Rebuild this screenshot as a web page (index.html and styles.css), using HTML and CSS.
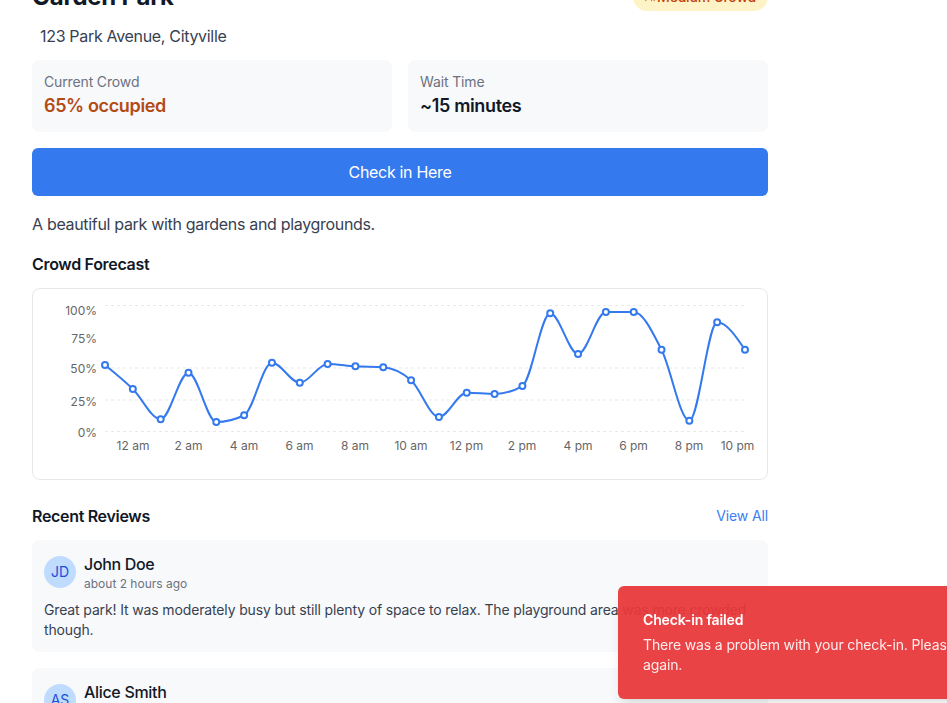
FILE: index.html
```html
<!DOCTYPE html>
<html lang="en">
<head>
<meta charset="utf-8">
<title>Garden Park</title>
<link rel="stylesheet" href="styles.css">
</head>
<body>
<main class="page">
  <header class="place-header">
    <h1 class="place-title">Garden Park</h1>
    <span class="badge">
      <svg class="badge-icon" viewBox="0 0 24 24" fill="none" stroke="currentColor" stroke-width="2" stroke-linecap="round" stroke-linejoin="round"><path d="M16 21v-2a4 4 0 0 0-4-4H6a4 4 0 0 0-4 4v2"/><circle cx="9" cy="7" r="4"/><path d="M22 21v-2a4 4 0 0 0-3-3.87"/><path d="M16 3.13a4 4 0 0 1 0 7.75"/></svg>
      Medium Crowd
    </span>
  </header>
  <p class="address">123 Park Avenue, Cityville</p>

  <div class="stats">
    <div class="stat">
      <div class="stat-label">Current Crowd</div>
      <div class="stat-value stat-value--warn">65% occupied</div>
    </div>
    <div class="stat">
      <div class="stat-label">Wait Time</div>
      <div class="stat-value">~15 minutes</div>
    </div>
  </div>

  <button class="checkin-btn" type="button">Check in Here</button>

  <p class="description">A beautiful park with gardens and playgrounds.</p>

  <h2 class="section-title section-title--chart">Crowd Forecast</h2>
  <div class="chart-card">
    <svg class="chart" width="704" height="160" viewBox="0 0 704 160">
      <g class="grid">
        <line x1="57" x2="697" y1="1.5" y2="1.5"/>
        <line x1="57" x2="697" y1="64" y2="64"/>
        <line x1="57" x2="697" y1="96" y2="96"/>
        <line x1="57" x2="697" y1="127.5" y2="127.5"/>
      </g>
      <g class="axis axis--y">
        <text x="49" y="6">100%</text>
        <text x="49" y="34">75%</text>
        <text x="49" y="64">50%</text>
        <text x="49" y="97">25%</text>
        <text x="49" y="128">0%</text>
      </g>
      <g class="axis axis--x">
        <text x="85" y="141">12 am</text>
        <text x="140.5" y="141">2 am</text>
        <text x="196" y="141">4 am</text>
        <text x="251.5" y="141">6 am</text>
        <text x="307" y="141">8 am</text>
        <text x="363" y="141">10 am</text>
        <text x="418.5" y="141">12 pm</text>
        <text x="474" y="141">2 pm</text>
        <text x="530" y="141">4 pm</text>
        <text x="585.5" y="141">6 pm</text>
        <text x="641" y="141">8 pm</text>
        <text x="689.5" y="141">10 pm</text>
      </g>
      <g id="series"></g>
    </svg>
  </div>

  <div class="reviews-header">
    <h2 class="section-title">Recent Reviews</h2>
    <a class="view-all" href="#">View All</a>
  </div>

  <div class="reviews">
    <article class="review">
      <div class="review-head">
        <div class="avatar">JD</div>
        <div>
          <div class="review-name">John Doe</div>
          <div class="review-time">about 2 hours ago</div>
        </div>
      </div>
      <p class="review-text">Great park! It was moderately busy but still plenty of space to relax. The playground area was more crowded though.</p>
    </article>
    <article class="review">
      <div class="review-head">
        <div class="avatar">AS</div>
        <div>
          <div class="review-name">Alice Smith</div>
          <div class="review-time">about 5 hours ago</div>
        </div>
      </div>
      <p class="review-text">Lovely gardens and clean paths. Got a little busy around lunchtime, but easy to find a quiet bench.</p>
    </article>
  </div>
</main>

<div class="toast" role="status">
  <div class="toast-title">Check-in failed</div>
  <div class="toast-desc">There was a problem with your check-in. Please try again.</div>
</div>

<script src="script.js"></script>
</body>
</html>
```

FILE: styles.css
```css
* { box-sizing: border-box; }

html, body {
  margin: 0;
  padding: 0;
  overflow: hidden;
  background: #ffffff;
}

body {
  font-family: "Inter", "Noto Sans", "Liberation Sans", sans-serif;
  color: #111827;
  font-size: 16px;
  line-height: 24px;
  letter-spacing: -0.02em;
}

.page {
  width: 736px;
  margin: -19px 0 0 32px;
  padding-bottom: 40px;
}

.place-header {
  display: flex;
  justify-content: space-between;
  align-items: center;
  height: 32px;
}

.place-title {
  margin: 0;
  font-size: 24px;
  line-height: 32px;
  font-weight: 700;
  letter-spacing: -0.01em;
  color: #111827;
}

.badge {
  display: inline-flex;
  align-items: center;
  gap: 2px;
  padding: 4px 12px;
  border-radius: 9999px;
  background: #fef3c7;
  color: #c2410c;
  font-size: 14px;
  line-height: 20px;
  font-weight: 500;
  letter-spacing: -0.015em;
}

.badge-icon {
  width: 10px;
  height: 10px;
}

.address {
  margin: 11px 0 0;
  padding-left: 8px;
  color: #374151;
  font-size: 16px;
  line-height: 24px;
}

.stats {
  display: grid;
  grid-template-columns: 1fr 1fr;
  gap: 16px;
  margin-top: 12px;
}

.stat {
  background: #f8f9fb;
  border-radius: 8px;
  padding: 12px;
}

.stat-label {
  font-size: 14px;
  line-height: 20px;
  letter-spacing: -0.01em;
  color: #6b7280;
}

.stat-value {
  font-size: 18px;
  line-height: 28px;
  font-weight: 600;
  letter-spacing: -0.02em;
  color: #111827;
}

.stat-value--warn {
  color: #b44a14;
}

.checkin-btn {
  display: block;
  width: 100%;
  height: 48px;
  margin-top: 16px;
  border: 0;
  border-radius: 6px;
  background: #3579ee;
  color: #ffffff;
  font-family: inherit;
  font-size: 16px;
  line-height: 24px;
  letter-spacing: -0.02em;
}

.description {
  margin: 16px 0 0;
  color: #374151;
  font-size: 16px;
  line-height: 24px;
}

.section-title {
  margin: 0;
  font-size: 16px;
  line-height: 24px;
  font-weight: 600;
  color: #111827;
}

.section-title--chart {
  margin-top: 16px;
}

.chart-card {
  margin-top: 12px;
  border: 1px solid #e5e7eb;
  border-radius: 8px;
  padding: 15px;
  height: 192px;
}

.chart {
  display: block;
  overflow: visible;
}

.grid line {
  stroke: #e8e9ec;
  stroke-width: 1;
  stroke-dasharray: 3 3;
}

.axis text {
  font-family: "Inter", "Noto Sans", "Liberation Sans", sans-serif;
  font-size: 12px;
  letter-spacing: 0;
  fill: #666666;
  dominant-baseline: central;
}

.axis--y text { text-anchor: end; }
.axis--x text { text-anchor: middle; }

.series-line {
  fill: none;
  stroke: #3479ee;
  stroke-width: 2;
}

.series-dot {
  fill: #ffffff;
  stroke: #3479ee;
  stroke-width: 2;
}

.reviews-header {
  display: flex;
  justify-content: space-between;
  align-items: center;
  margin-top: 24px;
}

.view-all {
  color: #3b7ff2;
  font-size: 14px;
  line-height: 20px;
  letter-spacing: -0.01em;
  text-decoration: none;
}

.reviews {
  display: flex;
  flex-direction: column;
  gap: 16px;
  margin-top: 12px;
}

.review {
  background: #f8f9fb;
  border-radius: 8px;
  padding: 12px;
}

.review-head {
  display: flex;
  align-items: center;
  gap: 8px;
}

.avatar {
  width: 32px;
  height: 32px;
  border-radius: 50%;
  background: #bfdbfe;
  color: #1d4ed8;
  display: flex;
  align-items: center;
  justify-content: center;
  font-size: 14px;
  line-height: 20px;
  letter-spacing: 0;
}

.review-name {
  font-size: 16px;
  line-height: 24px;
  font-weight: 500;
  color: #111827;
}

.review-time {
  font-size: 12px;
  line-height: 16px;
  letter-spacing: 0;
  color: #6b7280;
}

.review-text {
  margin: 8px 0 0;
  font-size: 14px;
  line-height: 20px;
  letter-spacing: -0.01em;
  color: #374151;
}

.toast {
  position: fixed;
  left: 618px;
  top: 586px;
  width: 392px;
  padding: 24px 20px 24px 25px;
  display: grid;
  gap: 5px;
  background: #e8383a;
  color: #ffffff;
  border-radius: 6px;
  opacity: 0.94;
  box-shadow: 0 10px 15px -3px rgba(0, 0, 0, 0.1), 0 4px 6px -4px rgba(0, 0, 0, 0.1);
}

.toast-title {
  font-size: 14px;
  line-height: 20px;
  font-weight: 600;
  letter-spacing: -0.01em;
}

.toast-desc {
  font-size: 14px;
  line-height: 20px;
  letter-spacing: -0.01em;
  opacity: 0.9;
}
```

FILE: script.js
```js
(function () {
  var values = [52.8, 33.7, 9.7, 46.7, 7.5, 12.9, 54.6, 38.7, 53.6, 51.7, 51, 40.6,
                11.5, 30.8, 29.8, 36.1, 93.8, 61.5, 94.8, 94.8, 64.9, 8.6, 86.7, 64.9];
  var left = 57, right = 697, bottom = 127.5, scale = 1.26;
  var step = (right - left) / (values.length - 1);
  var pts = values.map(function (v, i) {
    return [left + i * step, bottom - v * scale];
  });

  function sign(x) { return x < 0 ? -1 : 1; }
  function slope3(p0, p1, p2) {
    var h0 = p1[0] - p0[0], h1 = p2[0] - p1[0];
    var s0 = (p1[1] - p0[1]) / h0, s1 = (p2[1] - p1[1]) / h1;
    var p = (s0 * h1 + s1 * h0) / (h0 + h1);
    return (sign(s0) + sign(s1)) * Math.min(Math.abs(s0), Math.abs(s1), 0.5 * Math.abs(p)) || 0;
  }
  function slope2(p0, p1, t) {
    var h = p1[0] - p0[0];
    return h ? (3 * (p1[1] - p0[1]) / h - t) / 2 : t;
  }

  var n = pts.length;
  var t = new Array(n);
  for (var i = 1; i < n - 1; i++) t[i] = slope3(pts[i - 1], pts[i], pts[i + 1]);
  t[0] = slope2(pts[0], pts[1], t[1]);
  t[n - 1] = slope2(pts[n - 2], pts[n - 1], t[n - 2]);

  var d = "M" + pts[0][0].toFixed(2) + "," + pts[0][1].toFixed(2);
  for (var k = 0; k < n - 1; k++) {
    var a = pts[k], b = pts[k + 1], dx = (b[0] - a[0]) / 3;
    d += "C" + (a[0] + dx).toFixed(2) + "," + (a[1] + dx * t[k]).toFixed(2) + "," +
         (b[0] - dx).toFixed(2) + "," + (b[1] - dx * t[k + 1]).toFixed(2) + "," +
         b[0].toFixed(2) + "," + b[1].toFixed(2);
  }

  var ns = "http://www.w3.org/2000/svg";
  var g = document.getElementById("series");
  var path = document.createElementNS(ns, "path");
  path.setAttribute("d", d);
  path.setAttribute("class", "series-line");
  g.appendChild(path);
  pts.forEach(function (p) {
    var c = document.createElementNS(ns, "circle");
    c.setAttribute("cx", p[0].toFixed(2));
    c.setAttribute("cy", p[1].toFixed(2));
    c.setAttribute("r", "3");
    c.setAttribute("class", "series-dot");
    g.appendChild(c);
  });
})();
```
